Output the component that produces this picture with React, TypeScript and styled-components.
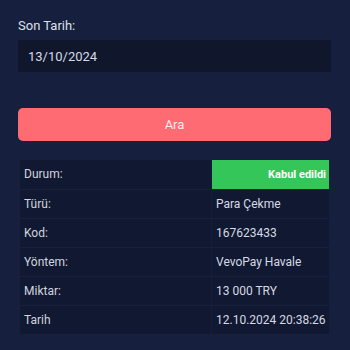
import React from 'react';
import styled, { createGlobalStyle } from 'styled-components';

const GlobalStyle = createGlobalStyle`
  html, body {
    margin: 0;
    padding: 0;
    background: #161f3d;
  }
  body {
    font-family: Roboto, "Liberation Sans", sans-serif;
    color: #d3d7e2;
  }
`;

const Page = styled.div`
  width: 350px;
  height: 350px;
  box-sizing: border-box;
  padding: 18px 19px 0 18px;
  display: flex;
  flex-direction: column;
  overflow: hidden;
`;

const Label = styled.label`
  font-size: 13px;
  line-height: 15px;
  color: #dde1ea;
  margin-bottom: 7px;
`;

const DateInput = styled.div`
  height: 32px;
  background: #10172d;
  display: flex;
  align-items: center;
  padding: 0 10px;
  font-size: 13px;
  color: #d6dae4;
`;

const SearchButton = styled.button`
  margin-top: 36px;
  height: 33px;
  border: none;
  border-radius: 5px;
  background: #fe6b73;
  color: rgba(255, 255, 255, 0.88);
  font-family: inherit;
  font-size: 13px;
  cursor: pointer;
`;

const Table = styled.table`
  margin: 19px 2px 0 2px;
  border-collapse: collapse;
  background: #111831;
  font-size: 12px;
  table-layout: fixed;
`;

const Row = styled.tr`
  height: 29px;
  border-top: 1px solid #182040;
  &:first-child {
    border-top: none;
  }
`;

const KeyCell = styled.td`
  width: 183px;
  padding: 0 4px;
  color: #d0d4df;
  border-right: 1px solid #161d3a;
  white-space: nowrap;
`;

const ValueCell = styled.td<{ $status?: boolean }>`
  padding: 0 3px 0 4px;
  white-space: nowrap;
  color: ${p => (p.$status ? '#ffffff' : '#d6dae4')};
  text-align: ${p => (p.$status ? 'right' : 'left')};
  background: ${p => (p.$status ? '#34c659' : 'transparent')};
  font-weight: ${p => (p.$status ? 700 : 400)};
  font-size: ${p => (p.$status ? '11px' : '12px')};
`;

const rows: { key: string; value: string; status?: boolean }[] = [
  { key: 'Durum:', value: 'Kabul edildi', status: true },
  { key: 'Türü:', value: 'Para Çekme' },
  { key: 'Kod:', value: '167623433' },
  { key: 'Yöntem:', value: 'VevoPay Havale' },
  { key: 'Miktar:', value: '13 000 TRY' },
  { key: 'Tarih', value: '12.10.2024 20:38:26' },
];

export default function App() {
  return (
    <>
      <GlobalStyle />
      <Page>
        <Label>Son Tarih:</Label>
        <DateInput>13/10/2024</DateInput>
        <SearchButton type="button">Ara</SearchButton>
        <Table>
          <tbody>
            {rows.map(r => (
              <Row key={r.key}>
                <KeyCell>{r.key}</KeyCell>
                <ValueCell $status={r.status}>{r.value}</ValueCell>
              </Row>
            ))}
          </tbody>
        </Table>
      </Page>
    </>
  );
}
